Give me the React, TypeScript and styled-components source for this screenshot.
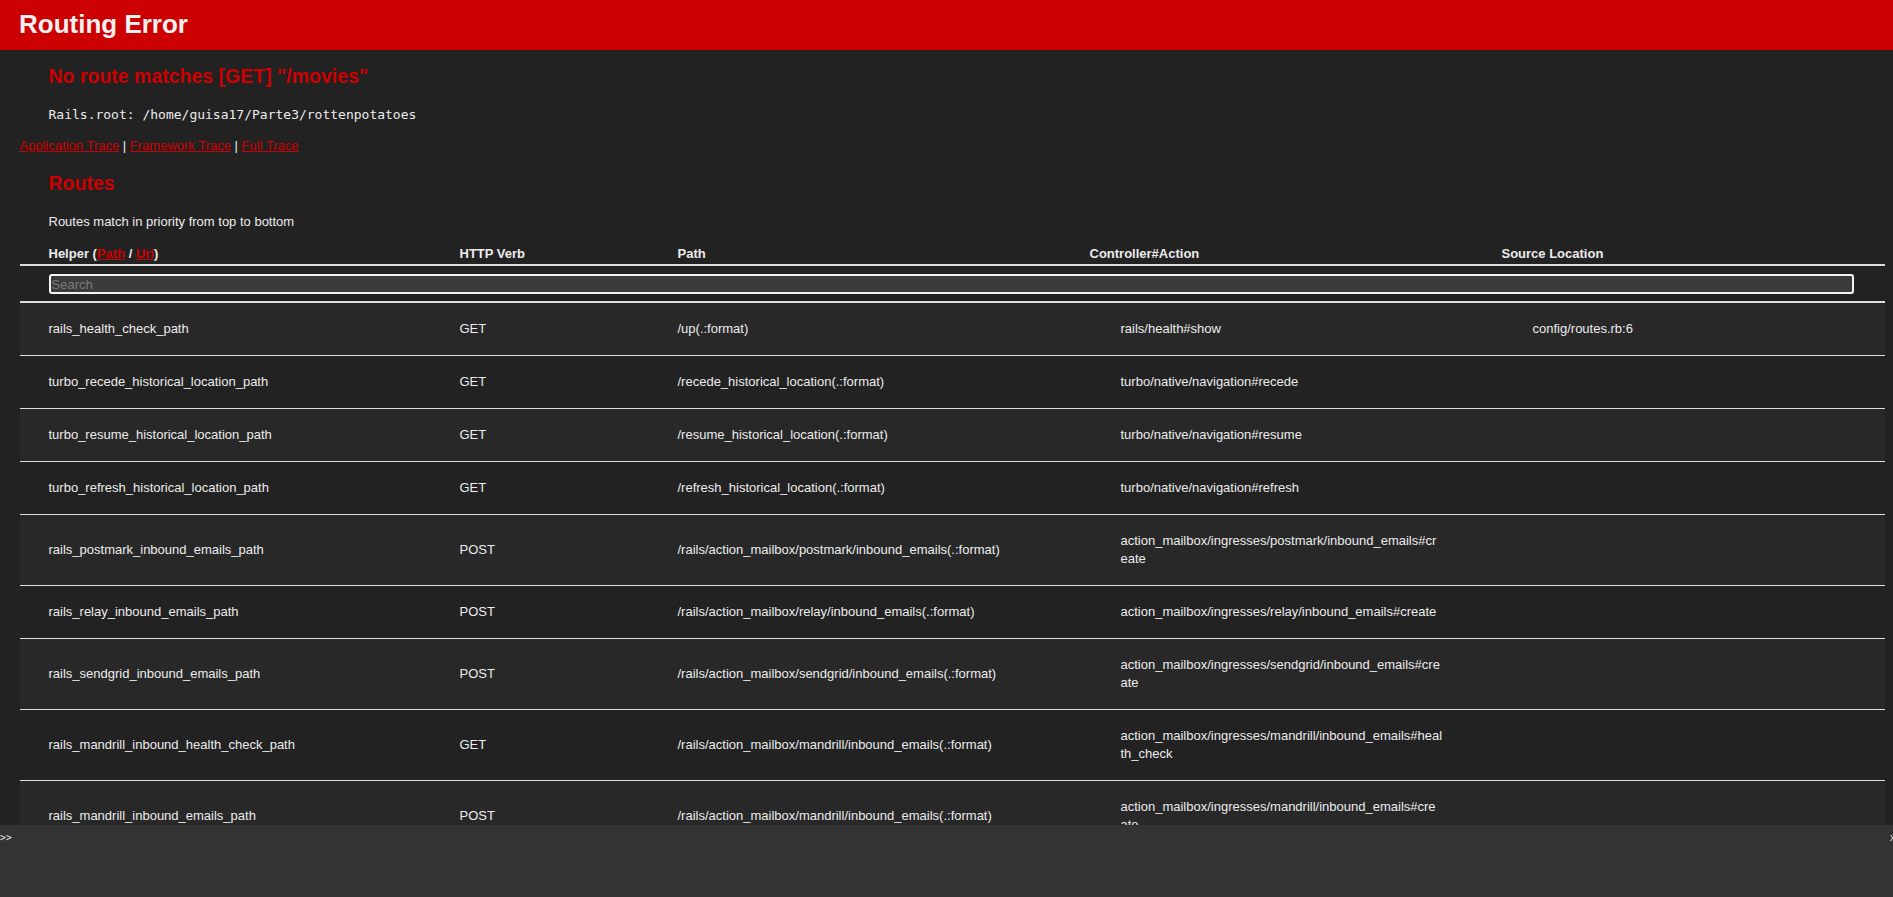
import React from "react";
import styled, { createGlobalStyle } from "styled-components";

const GlobalStyle = createGlobalStyle`
  html, body {
    margin: 0;
    padding: 0;
    overflow: hidden;
  }
  body {
    background: #222;
    color: #ececec;
    font-family: "Liberation Sans", Helvetica, Arial, sans-serif;
    font-size: 13px;
    line-height: 18px;
  }
  * { box-sizing: border-box; }
`;

const COLUMNS = "411px 218px 412px 412px 1fr";

const Header = styled.header`
  height: 50px;
  background: #cc0000;
  color: #f0f0f0;
  padding: 0 19px 2px;
  display: flex;
  align-items: center;
`;

const Title = styled.h1`
  margin: 0;
  font-size: 26px;
  line-height: 29px;
  font-weight: bold;
`;

const Main = styled.main`
  padding: 0 8px 0 19.5px;
`;

const Heading = styled.h2<{ $top: number }>`
  margin: ${(p) => p.$top}px 0 0 29px;
  color: #cc0000;
  font-size: 19.5px;
  line-height: 25px;
  font-weight: bold;
`;

const Paragraph = styled.p<{ $top: number }>`
  margin: ${(p) => p.$top}px 0 0 29px;
  font-size: 13px;
  line-height: 18px;
`;

const Code = styled.code`
  font-family: "DejaVu Sans Mono", monospace;
  font-size: 13px;
`;

const TraceLinks = styled.div`
  margin-top: 13px;
  line-height: 18px;
`;

const RedLink = styled.a`
  color: #cc0000;
  text-decoration: underline;
  cursor: pointer;
`;

const Table = styled.div`
  margin-top: 13px;
  width: 100%;
`;

const HeadRow = styled.div`
  display: grid;
  grid-template-columns: ${COLUMNS};
  padding: 1px 0;
  border-bottom: 2px solid #ddd;
`;

const HeadCell = styled.div`
  padding-left: 29px;
  font-weight: bold;
  text-align: left;
`;

const SearchRow = styled.div`
  padding: 8px 31px 7px 29px;
  border-bottom: 2px solid #ddd;
`;

const SearchInput = styled.input`
  display: block;
  width: 100%;
  height: 20px;
  background: #3b3b3b;
  border: 2px solid #f4f4f4;
  border-radius: 3px;
  color: #ececec;
  font-family: "Liberation Sans", Helvetica, Arial, sans-serif;
  font-size: 13px;
  padding: 0 1px;
  outline: none;
  &::placeholder {
    color: #7a7a7a;
  }
`;

const Row = styled.div<{ $odd: boolean }>`
  display: grid;
  grid-template-columns: ${COLUMNS};
  align-items: center;
  min-height: 53px;
  padding: 17px 0;
  border-bottom: 1px solid #ddd;
  background: ${(p) => (p.$odd ? "#282828" : "#222")};
`;

const Cell = styled.div<{ $indent?: boolean }>`
  padding: 0 30px 0 ${(p) => (p.$indent ? 60 : 29)}px;
  white-space: nowrap;
`;

const Console = styled.div`
  position: fixed;
  left: 0;
  right: 0;
  bottom: 0;
  height: 72px;
  background: #333;
  color: #f0f0f0;
  font-family: "DejaVu Sans Mono", monospace;
  font-size: 10px;
  line-height: 12px;
  padding-top: 7px;
`;

const Prompt = styled.span`
  display: block;
`;

const CloseButton = styled.span`
  position: absolute;
  right: -3px;
  top: 7px;
  font-size: 11px;
  color: #ddd;
`;

type Route = {
  name: string;
  verb: string;
  path: string;
  action: string[];
  source?: string;
};

const routes: Route[] = [
  { name: "rails_health_check_path", verb: "GET", path: "/up(.:format)", action: ["rails/health#show"], source: "config/routes.rb:6" },
  { name: "turbo_recede_historical_location_path", verb: "GET", path: "/recede_historical_location(.:format)", action: ["turbo/native/navigation#recede"] },
  { name: "turbo_resume_historical_location_path", verb: "GET", path: "/resume_historical_location(.:format)", action: ["turbo/native/navigation#resume"] },
  { name: "turbo_refresh_historical_location_path", verb: "GET", path: "/refresh_historical_location(.:format)", action: ["turbo/native/navigation#refresh"] },
  { name: "rails_postmark_inbound_emails_path", verb: "POST", path: "/rails/action_mailbox/postmark/inbound_emails(.:format)", action: ["action_mailbox/ingresses/postmark/inbound_emails#cr", "eate"] },
  { name: "rails_relay_inbound_emails_path", verb: "POST", path: "/rails/action_mailbox/relay/inbound_emails(.:format)", action: ["action_mailbox/ingresses/relay/inbound_emails#create"] },
  { name: "rails_sendgrid_inbound_emails_path", verb: "POST", path: "/rails/action_mailbox/sendgrid/inbound_emails(.:format)", action: ["action_mailbox/ingresses/sendgrid/inbound_emails#cre", "ate"] },
  { name: "rails_mandrill_inbound_health_check_path", verb: "GET", path: "/rails/action_mailbox/mandrill/inbound_emails(.:format)", action: ["action_mailbox/ingresses/mandrill/inbound_emails#heal", "th_check"] },
  { name: "rails_mandrill_inbound_emails_path", verb: "POST", path: "/rails/action_mailbox/mandrill/inbound_emails(.:format)", action: ["action_mailbox/ingresses/mandrill/inbound_emails#cre", "ate"] },
];

export default function App() {
  return (
    <>
      <GlobalStyle />
      <Header>
        <Title>Routing Error</Title>
      </Header>
      <Main>
        <Heading $top={14}>No route matches [GET] "/movies"</Heading>
        <Paragraph $top={17}>
          <Code>Rails.root: /home/guisa17/Parte3/rottenpotatoes</Code>
        </Paragraph>
        <TraceLinks>
          <RedLink>Application Trace</RedLink> | <RedLink>Framework Trace</RedLink> |{" "}
          <RedLink>Full Trace</RedLink>
        </TraceLinks>
        <Heading $top={16}>Routes</Heading>
        <Paragraph $top={17}>Routes match in priority from top to bottom</Paragraph>
        <Table>
          <HeadRow>
            <HeadCell>
              Helper (<RedLink>Path</RedLink> / <RedLink>Url</RedLink>)
            </HeadCell>
            <HeadCell>HTTP Verb</HeadCell>
            <HeadCell>Path</HeadCell>
            <HeadCell>Controller#Action</HeadCell>
            <HeadCell>Source Location</HeadCell>
          </HeadRow>
          <SearchRow>
            <SearchInput type="search" placeholder="Search" />
          </SearchRow>
          {routes.map((r, i) => (
            <Row key={r.name} $odd={i % 2 === 0}>
              <Cell>{r.name}</Cell>
              <Cell>{r.verb}</Cell>
              <Cell>{r.path}</Cell>
              <Cell $indent>
                {r.action.map((line, j) => (
                  <React.Fragment key={j}>
                    {j > 0 && <br />}
                    {line}
                  </React.Fragment>
                ))}
              </Cell>
              <Cell $indent>{r.source ?? ""}</Cell>
            </Row>
          ))}
        </Table>
      </Main>
      <Console>
        <Prompt>&gt;&gt;</Prompt>
        <CloseButton>x</CloseButton>
      </Console>
    </>
  );
}
